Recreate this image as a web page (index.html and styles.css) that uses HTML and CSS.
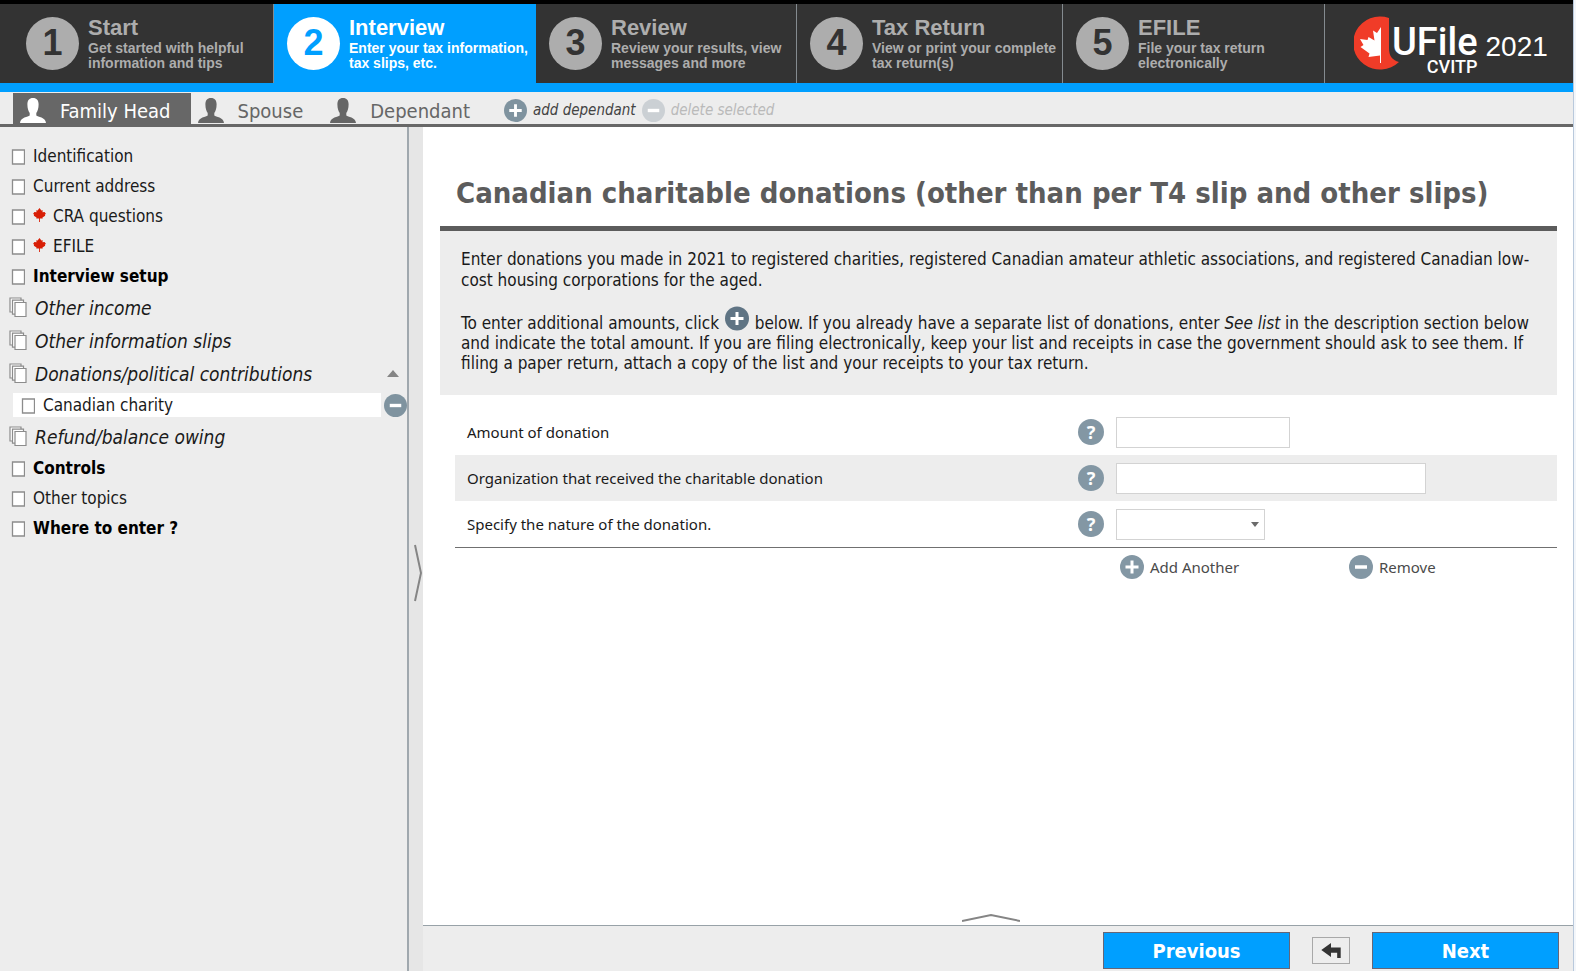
FILE: index.html
```html
<!DOCTYPE html>
<html lang="en">
<head>
<meta charset="utf-8">
<title>UFile 2021 - Interview</title>
<link rel="stylesheet" href="styles.css">
</head>
<body>
<svg class="defs" aria-hidden="true">
  <symbol id="person" viewBox="0 0 26 25"><path d="M13 0c3.800 0 5.600 2.300 5.600 6.500 0 4-1 6.500-2.300 8.500v2.500c1.500 1.500 9.200 1.500 9.700 7.500H0c.5-6 8.200-6 9.700-7.500V15C8.400 13 7.400 10.500 7.400 6.500 7.400 2.300 9.200 0 13 0z" fill="currentColor"/></symbol>
  <symbol id="plus" viewBox="0 0 24 24"><circle cx="12" cy="12" r="12" fill="currentColor"/><path d="M12 5.500v13M5.500 12h13" stroke="#fff" stroke-width="3"/></symbol>
  <symbol id="minus" viewBox="0 0 24 24"><circle cx="12" cy="12" r="12" fill="currentColor"/><path d="M6 12h12" stroke="#fff" stroke-width="3.500"/></symbol>
  <symbol id="page" viewBox="0 0 14 16"><path d="M1.500 1h12v14h-12z" fill="#fff" stroke="#8c8c8c" stroke-width="1.300"/></symbol>
  <symbol id="pages" viewBox="0 0 18 21"><g fill="#fff" stroke="#8c8c8c" stroke-width="1.200"><path d="M1 1h11v14H1z"/><path d="M3.500 3.200h11v14h-11z"/><path d="M6 5.500h11v14H6z"/></g></symbol>
  <symbol id="leaf" viewBox="0 0 24 26"><path d="M12 0l3.500 4.500L18 4l-.5 4 4-.5L24 11l-2 1 .5 2.500-5 3 .5 2h-5.200V26h-1.600v-6.500H6l.5-2-5-3L2 12l-2-1 2.500-3.500 4 .5L6 4l2.500.5z" fill="currentColor"/></symbol>
</svg>

<div class="app">
  <header>
    <nav class="steps" aria-label="Steps">
      <a class="step" href="#start"><span class="num">1</span><span class="step-text"><strong>Start</strong><span>Get started with helpful<br>information and tips</span></span></a>
      <a class="step current" href="#interview" aria-current="step"><span class="num">2</span><span class="step-text"><strong>Interview</strong><span>Enter your tax information,<br>tax slips, etc.</span></span></a>
      <a class="step" href="#review"><span class="num">3</span><span class="step-text"><strong>Review</strong><span>Review your results, view<br>messages and more</span></span></a>
      <a class="step" href="#return"><span class="num">4</span><span class="step-text"><strong>Tax Return</strong><span>View or print your complete<br>tax return(s)</span></span></a>
      <a class="step" href="#efile"><span class="num">5</span><span class="step-text"><strong>EFILE</strong><span>File your tax return<br>electronically</span></span></a>
      <div class="brand">
        <svg class="brand-mark" viewBox="0 0 46 54" aria-hidden="true"><path d="M35 2A27 26.500 0 1 0 45 46C38 44 35 40 35 32z" fill="#f03c28"/><path d="M27 47V11l-4 6-4-2.500 1.500 10L14.500 21l-1 3L6 23l3.500 6-3 2 9 6.500-1 3.500 11.500-1.500V47z" fill="#fff"/></svg>
        <span class="brand-name"><span class="ufile">UFile</span><span class="cvitp">CVITP</span></span>
        <span class="year">2021</span>
      </div>
    </nav>
  </header>

  <nav class="people" aria-label="Family members">
    <a class="person active" href="#head"><svg><use href="#person"/></svg>Family Head</a>
    <a class="person" href="#spouse"><svg><use href="#person"/></svg>Spouse</a>
    <a class="person" href="#dependant"><svg><use href="#person"/></svg>Dependant</a>
    <button class="person-action" type="button"><svg><use href="#plus"/></svg>add dependant</button>
    <button class="person-action off" type="button" disabled><svg><use href="#minus"/></svg>delete selected</button>
  </nav>

  <div class="body">
    <nav class="topics" aria-label="Topics">
      <ul>
        <li><a href="#t1"><svg class="page"><use href="#page"/></svg>Identification</a></li>
        <li><a href="#t2"><svg class="page"><use href="#page"/></svg>Current address</a></li>
        <li><a href="#t3"><svg class="page"><use href="#page"/></svg><svg class="leaf"><use href="#leaf"/></svg>CRA questions</a></li>
        <li><a href="#t4"><svg class="page"><use href="#page"/></svg><svg class="leaf"><use href="#leaf"/></svg>EFILE</a></li>
        <li><a class="strong" href="#t5"><svg class="page"><use href="#page"/></svg>Interview setup</a></li>
        <li class="group"><a href="#t6"><svg class="pages"><use href="#pages"/></svg>Other income</a></li>
        <li class="group"><a href="#t7"><svg class="pages"><use href="#pages"/></svg>Other information slips</a></li>
        <li class="group"><a href="#t8"><svg class="pages"><use href="#pages"/></svg>Donations/political contributions</a><svg class="caret" viewBox="0 0 12 7"><path d="M6 0l6 7H0z" fill="#858585"/></svg></li>
        <li class="sub"><a href="#t9"><svg class="page"><use href="#page"/></svg>Canadian charity</a><button type="button" aria-label="Remove Canadian charity"><svg><use href="#minus"/></svg></button></li>
        <li class="group"><a href="#t10"><svg class="pages"><use href="#pages"/></svg>Refund/balance owing</a></li>
        <li><a class="strong" href="#t11"><svg class="page"><use href="#page"/></svg>Controls</a></li>
        <li><a href="#t12"><svg class="page"><use href="#page"/></svg>Other topics</a></li>
        <li><a class="strong" href="#t13"><svg class="page"><use href="#page"/></svg>Where to enter ?</a></li>
      </ul>
    </nav>
    <button class="splitter" type="button" aria-label="Resize topics"><svg viewBox="0 0 8 58"><path d="M1 1l6 28-6 28" fill="none" stroke="#858585" stroke-width="2"/></svg></button>

    <div class="work">
      <main>
        <h1>Canadian charitable donations (other than per T4 slip and other slips)</h1>
        <section class="intro">
          <p class="first">Enter donations you made in 2021 to registered charities, registered Canadian amateur athletic associations, and registered Canadian low-<br>cost housing corporations for the aged.</p>
          <p>To enter additional amounts, click <svg class="inline-plus"><use href="#plus"/></svg> below. If you already have a separate list of donations, enter <em>See list</em> in the description section below<br>and indicate the total amount. If you are filing electronically, keep your list and receipts in case the government should ask to see them. If<br>filing a paper return, attach a copy of the list and your receipts to your tax return.</p>
        </section>
        <form class="fields">
          <div class="field"><label for="amount">Amount of donation</label><div class="entry"><button class="help" type="button" aria-label="Help">?</button><input id="amount" class="short" type="text"></div></div>
          <div class="field shaded"><label for="org">Organization that received the charitable donation</label><div class="entry"><button class="help" type="button" aria-label="Help">?</button><input id="org" class="long" type="text"></div></div>
          <div class="field"><label for="nature">Specify the nature of the donation.</label><div class="entry"><button class="help" type="button" aria-label="Help">?</button><div class="pick"><select id="nature"><option></option></select><svg viewBox="0 0 8 5"><path d="M0 0h8L4 5z" fill="#6b6b6b"/></svg></div></div></div>
          <div class="repeat">
            <button type="button"><svg><use href="#plus"/></svg>Add Another</button>
            <button type="button"><svg><use href="#minus"/></svg>Remove</button>
          </div>
        </form>
        <svg class="expand" viewBox="0 0 58 9"><path d="M0 8l29-6 29 6" fill="none" stroke="#858585" stroke-width="2"/></svg>
      </main>
      <footer>
        <button class="go" type="button">Previous</button>
        <button class="back" type="button" aria-label="Back"><svg viewBox="0 0 22 17"><path d="M0 8l11-8v5h11v12h-4v-6h-7v5z" fill="#333"/></svg></button>
        <button class="go" type="button">Next</button>
      </footer>
    </div>
  </div>
</div>
</body>
</html>
```
FILE: styles.css
```css
* { box-sizing: border-box; }
body {
  margin: 0;
  background: #f3f6fa;
  color: #1a1a1a;
  font-family: "DejaVu Sans Condensed", "DejaVu Sans", sans-serif;
  font-size: 17px;
}
a { color: inherit; text-decoration: none; }
button { margin: 0; padding: 0; border: 0; background: none; color: inherit; font: inherit; }
svg { display: block; flex: none; }
.defs { position: absolute; width: 0; height: 0; }

.app {
  display: flex;
  flex-direction: column;
  min-height: 100vh;
  margin-right: 2px;
  border-right: 1px solid #b9c9dc;
}

/* step header */
header { border-top: 4px solid #000; border-bottom: 9px solid #009fff; background: #333; }
.steps {
  display: grid;
  grid-template-columns: 274fr 262fr 261fr 266fr 262fr 248fr;
  height: 79px;
  font-family: "Liberation Sans", Arial, sans-serif;
  font-weight: bold;
  color: #adadad;
}
.step { display: flex; gap: 9px; padding: 13px 0 0 13px; border-right: 1px solid #848b90; white-space: nowrap; }
.step:first-child { padding-left: 26px; }
.step.current { background: #009fff; border-color: #009fff; color: #fff; }
.num {
  flex: none;
  width: 53px;
  height: 53px;
  border-radius: 50%;
  background: #adadad;
  color: #333;
  font-size: 36px;
  line-height: 51px;
  text-align: center;
}
.current .num { background: #fff; color: #009fff; }
.step-text { font-size: 14px; line-height: 15px; }
.step-text strong { display: block; font-size: 22px; line-height: 22px; padding-bottom: 2px; }
.step-text span { display: block; }
.brand { display: flex; padding: 12px 0 0 29px; color: #fff; }
.brand-mark { width: 46px; height: 54px; }
.brand-name { display: flex; flex-direction: column; align-items: flex-end; margin-left: -8px; font-family: Roboto, sans-serif; font-weight: 500; }
.ufile { padding-top: 8px; font-size: 38px; line-height: 36px; }
.cvitp { font-size: 18px; line-height: 14px; }
.year { padding: 14px 0 0 8px; font-size: 28px; line-height: 34px; font-weight: normal; }

/* family tabs */
.people {
  display: flex;
  height: 35px;
  padding: 1px 0 0 13px;
  border-bottom: 3px solid #676767;
  background: #ededed;
  color: #666;
}
.person { display: flex; align-items: center; gap: 14px; padding: 4px 20px 0 7px; font-size: 20px; }
.person svg { width: 26px; height: 25px; }
.person.active { background: #676767; color: #fff; }
.person-action { display: flex; align-items: center; gap: 6px; margin-left: 6px; padding-top: 3px; font-size: 15px; font-style: italic; color: #444; }
.person-action svg { width: 23px; height: 23px; color: #7f939f; }
.person + .person-action { margin-left: 14px; }
.person-action.off { color: #bababa; }
.off svg { color: #cbd0d4; }

.body { flex: 1; display: flex; }

/* topic list */
.topics { flex: none; width: 409px; border-right: 2px solid #a0a8ae; background: #ededed; }
.topics ul { margin: 0; padding: 14px 0 0; list-style: none; }
.topics li { display: flex; align-items: center; height: 30px; }
.topics a { display: flex; align-items: center; gap: 8px; padding-left: 11px; }
.topics .strong { font-weight: bold; color: #000; }
.page { width: 14px; height: 16px; margin-top: 2px; }
.leaf { width: 13px; height: 14px; margin-top: -2px; margin-right: -1px; color: #d81e05; }
.topics .group { height: 33px; font-size: 19px; font-style: italic; justify-content: space-between; padding-right: 8px; }
.topics .group a { padding-left: 9px; }
.pages { width: 18px; height: 21px; }
.caret { width: 12px; height: 7px; }
.topics .sub { gap: 3px; padding-left: 13px; }
.topics .sub a { flex: 1; height: 24px; padding-left: 8px; background: #fff; }
.sub button svg { width: 23px; height: 23px; color: #7f939f; }
.splitter { display: flex; flex: none; align-items: center; justify-content: flex-end; width: 14px; padding: 48px 1px 0 0; background: #e6e6e6; }
.splitter svg { width: 8px; height: 58px; }

/* work area */
.work { flex: 1; display: flex; flex-direction: column; min-width: 0; background: #fff; }
main { flex: 1; display: flex; flex-direction: column; padding: 46px 16px 3px 17px; }
h1 { margin: 0; padding: 0 16px 13px; border-bottom: 5px solid #5c5c5c; color: #5c5c5c; font-size: 29px; line-height: 40px; white-space: nowrap; }
.intro { padding: 18px 21px 22px; background: #ededed; line-height: 20px; white-space: nowrap; }
.intro p { margin: 0; }
.intro .first { line-height: 21px; padding-bottom: 15px; }
.inline-plus { display: inline-block; width: 24px; height: 25px; margin: 0 1px; vertical-align: -2px; color: #5f7484; }
.fields { display: flex; flex-direction: column; margin: 14px 0 0 15px; font-family: "Noto Sans", sans-serif; font-size: 15px; }
.field { display: grid; grid-template-columns: 1fr 479px; align-items: center; height: 46px; padding-left: 12px; }
.shaded { background: #ededed; }
.entry { display: flex; align-items: center; gap: 12px; }
.help { width: 26px; height: 26px; border-radius: 50%; background: #8397a4; color: #fff; font-weight: bold; font-size: 18px; line-height: 26px; }
input, select { height: 31px; border: 1px solid #d3d3d3; border-radius: 0; background: #fff; font: inherit; }
.short { width: 174px; }
.long { width: 310px; }
.pick { display: grid; align-items: center; }
.pick > * { grid-area: 1 / 1; }
.pick select { width: 149px; appearance: none; }
.pick svg { justify-self: end; width: 8px; height: 5px; margin-right: 6px; pointer-events: none; }
.repeat { display: grid; grid-template-columns: 229px 208px; justify-content: end; padding-top: 7px; border-top: 1px solid #707070; color: #4a4a4a; }
.repeat button { display: flex; align-items: center; gap: 6px; height: 24px; }
.repeat svg { width: 24px; height: 24px; color: #8397a4; }
.expand { align-self: center; width: 58px; height: 9px; margin-top: auto; margin-right: 16px; }

footer { display: flex; align-items: center; justify-content: flex-end; gap: 22px; height: 46px; padding: 4px 14px 0 0; border-top: 1px solid #98a2a8; background: #ededed; }
.go { width: 187px; height: 37px; border: 1px solid #667; background: #009fff; color: #fff; font-weight: bold; font-size: 20px; }
.back { display: flex; align-items: center; justify-content: center; width: 38px; height: 27px; border: 1px solid #a8a8a8; }
.back svg { width: 22px; height: 15px; }
```
